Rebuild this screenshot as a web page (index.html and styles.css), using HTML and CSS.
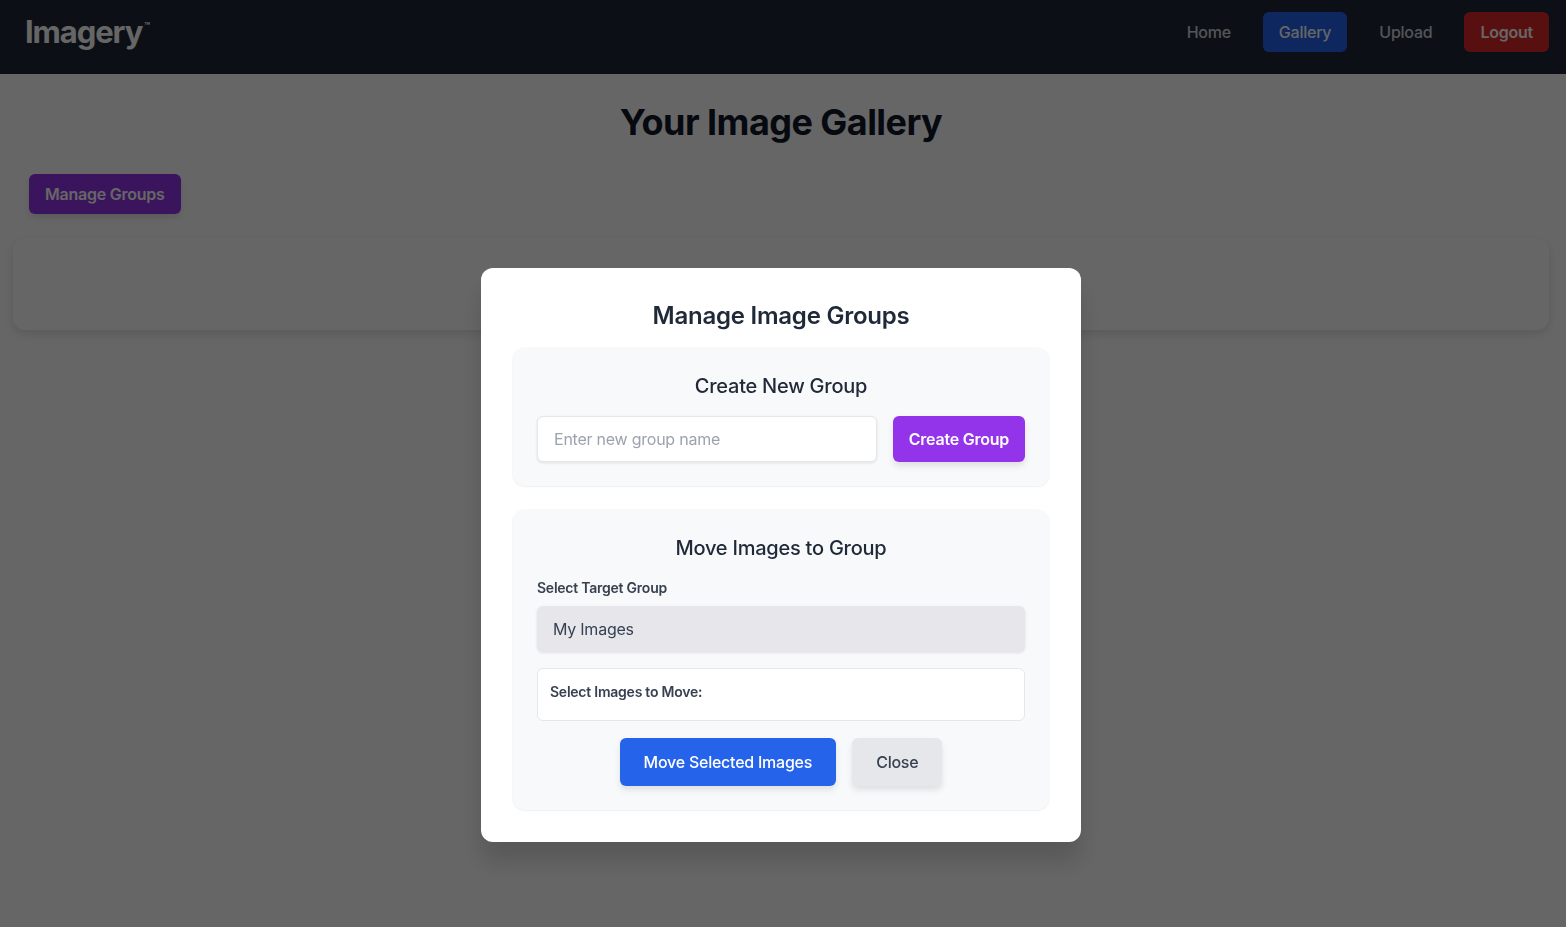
FILE: index.html
```html
<!DOCTYPE html>
<html lang="en">
<head>
<meta charset="utf-8">
<title>Imagery - Gallery</title>
<link rel="stylesheet" href="styles.css">
</head>
<body>
<header class="topbar">
  <div class="logo">Imagery<span class="tm">™</span></div>
  <nav class="nav">
    <a class="nav-link">Home</a>
    <a class="nav-link active">Gallery</a>
    <a class="nav-link">Upload</a>
    <a class="nav-link logout">Logout</a>
  </nav>
</header>
<main class="main">
  <h1 class="page-title">Your Image Gallery</h1>
  <button class="btn-manage">Manage Groups</button>
  <div class="gallery-card"></div>
</main>

<div class="overlay">
  <div class="modal">
    <h2 class="modal-title">Manage Image Groups</h2>
    <section class="panel">
      <h3 class="panel-title">Create New Group</h3>
      <div class="create-row">
        <input class="text-input" type="text" placeholder="Enter new group name">
        <button class="btn btn-purple">Create Group</button>
      </div>
    </section>
    <section class="panel">
      <h3 class="panel-title">Move Images to Group</h3>
      <label class="field-label">Select Target Group</label>
      <div class="select-box">My Images</div>
      <div class="images-box">
        <div class="images-label">Select Images to Move:</div>
      </div>
      <div class="actions">
        <button class="btn btn-blue">Move Selected Images</button>
        <button class="btn btn-gray">Close</button>
      </div>
    </section>
  </div>
</div>
</body>
</html>
```

FILE: styles.css
```css
* { box-sizing: border-box; }
html, body { margin: 0; padding: 0; }
body {
  font-family: Inter, "Noto Sans", "Liberation Sans", sans-serif;
  letter-spacing: -0.015em;
  background: #ffffff;
  color: #111827;
  height: 927px;
  overflow: hidden;
}
button, input { letter-spacing: inherit; }
.topbar {
  background: #1f2937;
  height: 74px;
  display: flex;
  align-items: flex-start;
  justify-content: space-between;
  padding: 12px 17px 0 25px;
}
.logo {
  color: #ffffff;
  font-size: 31px;
  font-weight: 700;
  line-height: 40px;
  letter-spacing: -0.035em;
}
.tm {
  font-size: 9px;
  font-weight: 700;
  line-height: 0;
  vertical-align: 14px;
  margin-left: 2px;
  letter-spacing: 0;
}
.nav { display: flex; gap: 16px; }
.nav-link {
  display: block;
  color: #d1d5db;
  font-size: 16px;
  font-weight: 500;
  line-height: 24px;
  padding: 8px 16px;
  border-radius: 6px;
}
.nav-link.active { background: #2563eb; color: #ffffff; }
.nav-link.logout { background: #dc2626; color: #ffffff; font-weight: 600; }
.main { padding: 28px 17px 0 13px; }
.page-title {
  margin: 0 0 32px;
  text-align: center;
  font-size: 36px;
  line-height: 40px;
  font-weight: 700;
  color: #111827;
  letter-spacing: -0.55px;
}
.btn-manage {
  margin-left: 16px;
  background: #9333ea;
  color: #ffffff;
  border: none;
  font-family: inherit;
  font-size: 16px;
  font-weight: 600;
  line-height: 24px;
  padding: 8px 16px;
  border-radius: 6px;
  box-shadow: 0 4px 6px rgba(0,0,0,0.1);
}
.gallery-card {
  margin-top: 24px;
  height: 92px;
  background: #ffffff;
  border-radius: 12px;
  box-shadow: 0 4px 10px rgba(0,0,0,0.12);
}
.overlay {
  position: fixed;
  inset: 0;
  background: rgba(0,0,0,0.6);
  display: flex;
  justify-content: center;
  align-items: flex-start;
  padding: 268px 4px 0 0;
}
.modal {
  width: 600px;
  background: #ffffff;
  border-radius: 12px;
  padding: 32px;
  box-shadow: 0 20px 25px rgba(0,0,0,0.15);
  display: flex;
  flex-direction: column;
  gap: 24px;
}
.modal-title {
  margin: 0 0 -8px;
  text-align: center;
  font-size: 24px;
  line-height: 32px;
  font-weight: 600;
  color: #1f2937;
}
.panel {
  background: #f8f9fb;
  border-radius: 12px;
  padding: 24px;
  box-shadow: 0 0 0 1px rgba(0,0,0,0.025), 0 1px 2px rgba(0,0,0,0.04);
  display: flex;
  flex-direction: column;
}
.panel-title {
  margin: 0 0 16px;
  text-align: center;
  font-size: 20px;
  line-height: 28px;
  font-weight: 500;
  color: #1f2937;
}
.create-row { display: flex; gap: 16px; }
.text-input {
  flex: 1;
  height: 46px;
  border: 1px solid #e5e7eb;
  border-radius: 6px;
  padding: 0 16px;
  font-family: inherit;
  font-size: 16px;
  color: #374151;
  background: #ffffff;
  box-shadow: 0 1px 3px rgba(0,0,0,0.1);
}
.text-input::placeholder { color: #9ca3af; }
.btn {
  border: none;
  font-family: inherit;
  font-size: 16px;
  line-height: 24px;
  border-radius: 6px;
  cursor: pointer;
}
.btn-purple {
  background: #9333ea;
  color: #ffffff;
  font-weight: 600;
  height: 46px;
  padding: 0 16px;
  box-shadow: 0 4px 6px rgba(0,0,0,0.1);
}
.field-label {
  display: block;
  font-size: 14px;
  line-height: 20px;
  font-weight: 600;
  color: #374151;
  margin-bottom: 8px;
}
.select-box {
  height: 46px;
  background: #e7e7eb;
  border-radius: 6px;
  padding: 0 16px;
  display: flex;
  align-items: center;
  font-size: 16px;
  color: #374151;
  box-shadow: 0 1px 3px rgba(0,0,0,0.1);
}
.images-box {
  margin-top: 16px;
  background: #ffffff;
  border: 1px solid #e5e7eb;
  border-radius: 6px;
  padding: 13px 12px 19px;
  height: 53px;
}
.images-label {
  font-size: 14px;
  line-height: 20px;
  font-weight: 600;
  color: #374151;
}
.actions {
  margin-top: 17px;
  display: flex;
  justify-content: center;
  gap: 16px;
}
.btn-blue {
  background: #2563eb;
  color: #ffffff;
  font-weight: 500;
  padding: 12px 24px;
  box-shadow: 0 4px 6px rgba(0,0,0,0.1);
}
.btn-gray {
  background: #e5e7eb;
  color: #374151;
  font-weight: 500;
  padding: 12px 24px;
  box-shadow: 0 4px 6px rgba(0,0,0,0.1);
}
```
